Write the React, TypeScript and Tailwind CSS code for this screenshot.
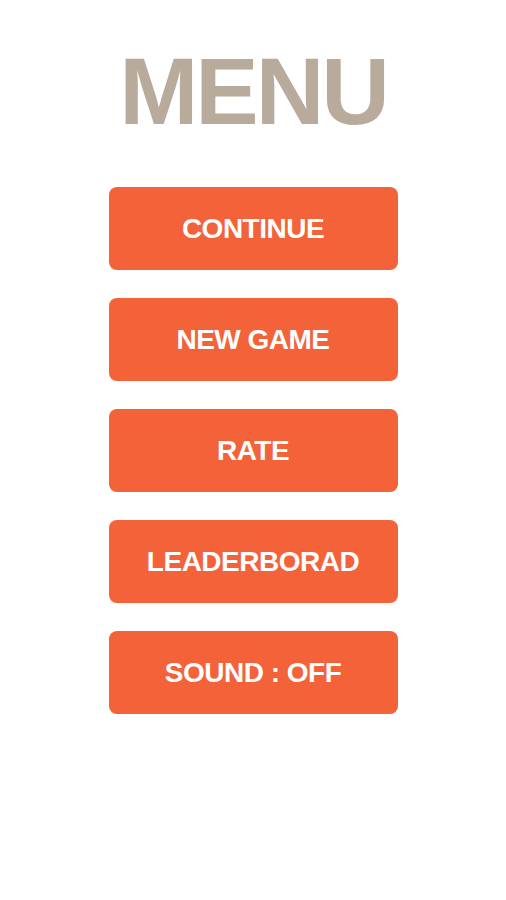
import React from "react";

const items = ["CONTINUE", "NEW GAME", "RATE", "LEADERBORAD", "SOUND : OFF"];

export default function App() {
  return (
    <div
      className="w-[506px] h-[900px] bg-white flex flex-col items-center"
      style={{ fontFamily: '"Liberation Sans", Arial, sans-serif' }}
    >
      <h1 className="mt-[39px] text-[95px] leading-[104px] font-bold tracking-[-3px] text-[#b9ab9c]">
        MENU
      </h1>
      <div className="mt-[44px] flex flex-col gap-[28px]">
        {items.map((t) => (
          <button
            key={t}
            className="w-[289px] h-[83px] rounded-[8px] bg-[#f4623a] text-white font-bold text-[28px] tracking-[-0.5px] flex items-center justify-center"
          >
            {t}
          </button>
        ))}
      </div>
    </div>
  );
}
